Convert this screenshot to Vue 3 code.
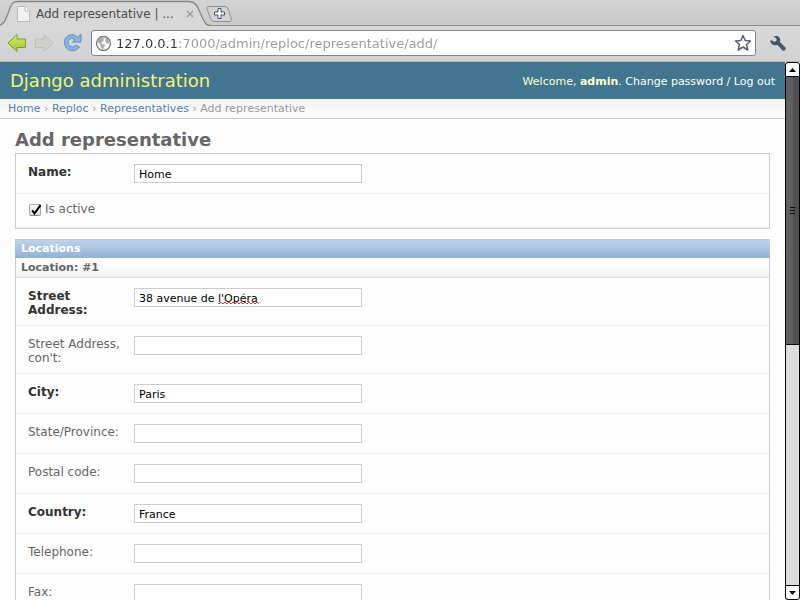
<script setup>
import { ref } from 'vue'

const url = ref('127.0.0.1:7000/admin/reploc/representative/add/')
const name = ref('Home')
const active = ref(true)
const fields = ref([
  { id: 'street', label: 'Street Address:', value: "38 avenue de l'Opéra", required: true, misspelled: true },
  { id: 'street2', label: "Street Address, con't:", value: '' },
  { id: 'city', label: 'City:', value: 'Paris', required: true },
  { id: 'state', label: 'State/Province:', value: '' },
  { id: 'postal', label: 'Postal code:', value: '' },
  { id: 'country', label: 'Country:', value: 'France', required: true },
  { id: 'phone', label: 'Telephone:', value: '' },
  { id: 'fax', label: 'Fax:', value: '' },
])
</script>

<template>
  <div class="browser">
    <div class="tabs">
      <svg class="tab-shape" width="240" height="26" viewBox="0 0 240 26" aria-hidden="true">
        <path d="M0 26V25C4 24 5 21 7 16L10 8C12 3 13 1.500 18 1.500H189C194 1.500 196 4 198 8L203 19C205 23 206 25.500 211 25.500V26Z" fill="#d8d8d8" />
        <path d="M0 25C4 24 5 21 7 16L10 8C12 3 13 1.500 18 1.500H189C194 1.500 196 4 198 8L203 19C205 23 206 25.500 211 25.500" fill="none" stroke="#858585" stroke-width="1.300" />
        <path d="M209 6.500H224C227 6.500 228 8 229 11L231 18C232 20.500 231 21.500 229 21.500H215C212 21.500 211 20 210 17L207 9C206.500 7.500 207 6.500 209 6.500Z" fill="#d3d3d3" stroke="#909090" />
      </svg>
      <div class="tab">
        <svg width="13" height="16" viewBox="0 0 13 16" aria-hidden="true">
          <path d="M.5.500H8L12.500 5V15.500H.5Z" fill="#f1f1f1" stroke="#bbb" />
          <path d="M8 .5V5H12.500" fill="#fff" stroke="#bbb" />
        </svg>
        <span class="tab-title">Add representative | ...</span>
        <button class="bare" aria-label="Close tab">
          <svg width="8" height="8" viewBox="0 0 8 8"><path d="M1 1L7 7M7 1L1 7" stroke="#a0a0a0" stroke-width="1.500" /></svg>
        </button>
      </div>
      <button class="bare new-tab" aria-label="New tab">
        <svg width="11" height="11" viewBox="0 0 11 11"><path d="M4 .5H7V4H10.500V7H7V10.500H4V7H.5V4H4Z" fill="#fff" stroke="#405573" /></svg>
      </button>
    </div>
    <div class="toolbar">
      <button class="bare" aria-label="Back">
        <svg width="20" height="20" viewBox="0 0 20 20">
          <defs><linearGradient id="green" x2="0" y2="1"><stop stop-color="#dceb76" /><stop offset="1" stop-color="#9fc51f" /></linearGradient></defs>
          <path d="M1 10L10 1.500V6H18.500V14.500H10V18.500Z" fill="url(#green)" stroke="#7d9c25" stroke-linejoin="round" />
        </svg>
      </button>
      <button class="bare forward" aria-label="Forward">
        <svg width="20" height="20" viewBox="0 0 20 20"><path d="M19 10L10 1.500V6H1.500V14.500H10V18.500Z" fill="#d0d1cd" stroke="#bec0bb" stroke-linejoin="round" /></svg>
      </button>
      <button class="bare reload" aria-label="Reload">
        <svg width="20" height="20" viewBox="0 0 20 20">
          <path d="M14.500 4.200C12 1.500 8 1 5 2.700C.7 5.300.4 11.600 3.700 15.300C7.200 19 13.500 18.500 16.500 14L12.700 12.300C11 14.200 8.300 14.400 6.500 12.700C4.500 10.700 4.700 7.500 7 6C8.800 4.800 10.500 5.200 12 6.800L9.500 9H18V1Z" fill="#86b5e4" stroke="#5a91c8" stroke-linejoin="round" />
        </svg>
      </button>
      <div class="omnibox">
        <svg width="17" height="17" viewBox="0 0 17 17" aria-hidden="true">
          <circle cx="8.500" cy="8.500" r="7" fill="#f4f4f4" stroke="#777" stroke-width="1.300" />
          <path d="M3 4L7 2.500L9 4L8 6.500L6 7.500L7 9L10 10L9 12L8 15L6 12L5 9L2.500 7Z" fill="#aaa" />
          <path d="M10.500 3L13.500 4.500L14.500 8L12 8.500L10.500 6.500Z" fill="#aaa" />
        </svg>
        <input v-model="url" class="url" aria-label="Address" spellcheck="false" />
        <button class="bare" aria-label="Bookmark">
          <svg width="18" height="18" viewBox="0 0 18 18"><path d="M9 1.500L11.200 6.500L16.500 7L12.500 10.500L13.800 16L9 13L4.200 16L5.500 10.500L1.500 7L6.800 6.500Z" fill="#fff" stroke="#53627a" stroke-width="1.500" stroke-linejoin="round" /></svg>
        </button>
      </div>
      <button class="bare wrench" aria-label="Settings">
        <svg width="18" height="17" viewBox="0 0 18 17"><path d="M4.500 1.500L8 .8C11 2 11.700 4.500 11 7L16.500 12.500C17.500 14.500 15.500 16.500 13.500 15.500L8.500 10C5 11 2 9.500 1.200 6.200L2 5L5.500 7L7.800 5.300L7.300 3.500Z" fill="#43566f" /></svg>
      </button>
    </div>

    <div class="viewport">
      <div class="page">
        <header class="site-header">
          <div class="brand">Django administration</div>
          <div class="user">Welcome, <strong>admin</strong>. <a href="#">Change password</a> / <a href="#">Log out</a></div>
        </header>
        <nav class="crumbs"><a href="#">Home</a> › <a href="#">Reploc</a> › <a href="#">Representatives</a> › Add representative</nav>
        <main>
          <h1>Add representative</h1>
          <section class="module">
            <div class="row">
              <label class="required" for="name">Name:</label>
              <div class="field"><input id="name" v-model="name" type="text" /></div>
            </div>
            <div class="row check-row">
              <span class="check">
                <input id="active" v-model="active" type="checkbox" />
                <svg v-if="active" width="13" height="13" viewBox="0 0 13 13" aria-hidden="true"><path d="M3.200 6.200L5.500 9.500L11.500 1.200" fill="none" stroke="#000" stroke-width="2" /></svg>
              </span>
              <label for="active">Is active</label>
            </div>
          </section>
          <section class="module">
            <h2>Locations</h2>
            <h3>Location: #1</h3>
            <div v-for="f in fields" :key="f.id" class="row">
              <label :class="{ required: f.required }" :for="f.id">{{ f.label }}</label>
              <div class="field">
                <input :id="f.id" v-model="f.value" type="text" spellcheck="false" />
                <span v-if="f.misspelled" class="squiggle" aria-hidden="true"></span>
              </div>
            </div>
          </section>
        </main>
      </div>
      <div class="scrollbar">
        <button class="arrow up" aria-label="Scroll up"><svg width="7" height="4" viewBox="0 0 7 4"><path d="M0 4L3.500 0L7 4Z" /></svg></button>
        <div class="thumb"><i></i><i></i><i></i></div>
        <div class="track"></div>
        <button class="arrow down" aria-label="Scroll down"><svg width="7" height="4" viewBox="0 0 7 4"><path d="M0 0L3.500 4L7 0Z" /></svg></button>
      </div>
    </div>
  </div>
</template>

<style>
body { overflow: hidden; }
</style>

<style scoped>
* { box-sizing: border-box; }
.browser {
  display: flex;
  flex-direction: column;
  height: 100vh;
  font-family: "DejaVu Sans", sans-serif;
  font-size: 12px;
  color: #666;
}
.bare { display: flex; padding: 0; border: 0; background: none; }
.tabs {
  position: relative;
  display: flex;
  align-items: center;
  height: 26px;
  flex: none;
  padding: 2px 0 0 17px;
  background: linear-gradient(#d3d3d3, #cacaca);
  border-bottom: 1px solid #8c8c8c;
}
.tab-shape { position: absolute; left: 0; top: 0; }
.tab { position: relative; display: flex; align-items: center; width: 177px; }
.tab-title { flex: 1; margin-left: 6px; color: #4c4c4c; white-space: nowrap; }
.new-tab { position: relative; margin-left: 20px; }
.toolbar {
  display: flex;
  align-items: center;
  height: 36px;
  flex: none;
  padding: 0 13px 1px 7px;
  background: linear-gradient(#d8d8d8, #d2d2d2);
  border-bottom: 1px solid #bababa;
}
.forward { margin-left: 7px; }
.reload { margin-left: 9px; }
.omnibox {
  flex: 1;
  display: flex;
  align-items: center;
  height: 26px;
  margin-left: 8px;
  padding: 0 3px;
  border: 1px solid #858585;
  border-radius: 3px;
  background: #fff;
}
.url {
  flex: 1;
  min-width: 0;
  margin-left: 4px;
  padding: 0;
  border: 0;
  outline: 0;
  font: 13px "DejaVu Sans", sans-serif;
  color: transparent;
  background: linear-gradient(90deg, #333 62px, #999 62px);
  -webkit-background-clip: text;
  background-clip: text;
}
.wrench { margin-left: 13px; }
.viewport { flex: 1; min-height: 0; display: flex; }
.page { flex: 1; min-width: 0; overflow: hidden; background: #fdfdfd; }
.site-header {
  display: flex;
  align-items: center;
  justify-content: space-between;
  height: 37px;
  padding: 0 10px;
  background: #417690;
  color: #ffc;
}
.brand { font-size: 18px; color: #f4f379; }
.user { padding-top: 2px; font-size: 11px; }
.user a { color: #fff; text-decoration: none; }
.crumbs {
  height: 20px;
  padding: 3px 8px 2px;
  border-bottom: 1px solid #ccc;
  background: linear-gradient(#efefef, #fff);
  font-size: 11px;
  line-height: 14px;
  color: #999;
}
.crumbs a { color: #5b80b2; text-decoration: none; }
main { padding: 10px 15px; }
h1 { margin: 0; font-size: 18px; line-height: 22px; padding-bottom: 2px; }
.module { margin-bottom: 10px; border: 1px solid #ccc; }
h2, h3 { margin: 0; padding: 0 5px; font-size: 11px; }
h2 { margin: -1px -1px 0; padding-left: 6px; line-height: 18px; background: linear-gradient(#bdd2ea, #91b2d3); color: #fff; border-top: 1px solid #b4cae0; }
h3 { line-height: 19px; background: linear-gradient(#fff 30%, #f0f0f0); border-bottom: 1px solid #ddd; }
.row {
  display: flex;
  min-height: 40px;
  padding: 10px 12px 8px;
  border-bottom: 1px solid #eee;
  line-height: 14px;
}
.row > label { width: 106px; padding: 1px 10px 0 0; }
.row > .required { font-weight: bold; color: #333; }
.field { position: relative; display: flex; align-items: flex-start; }
.field input {
  width: 228px;
  height: 19px;
  padding: 1px 4px 0;
  border: 1px solid #ccc;
  background: #fff;
  font: 11px "DejaVu Sans", sans-serif;
  color: #000;
}
.squiggle {
  position: absolute;
  left: 84px;
  top: 14px;
  width: 41px;
  height: 2px;
  background: conic-gradient(#e33 25%, transparent 0 50%, #e33 0 75%, transparent 0) 0 0 / 4px 2px;
}
.check-row { min-height: 34px; padding-top: 7px; padding-bottom: 8px; }
.check { position: relative; display: flex; align-items: flex-start; margin: 3px 4px 0 1px; }
.check input {
  appearance: none;
  width: 12px;
  height: 12px;
  margin: 0;
  border: 1px solid #aaa;
  border-bottom-color: #888;
  border-radius: 2px;
  background: linear-gradient(#f6f6f6, #ddd);
}
.check svg { position: absolute; left: 0; top: 0; pointer-events: none; }
.scrollbar { width: 15px; flex: none; display: flex; flex-direction: column; background: #ddd; }
.arrow {
  display: flex;
  align-items: center;
  justify-content: center;
  width: 15px;
  height: 15px;
  padding: 0;
  border: 1px solid #000;
  background: #fff;
}
.up { border-radius: 3px 3px 0 0; }
.down { border-radius: 0 0 3px 3px; }
.thumb {
  flex: 268;
  display: flex;
  flex-direction: column;
  align-items: center;
  justify-content: center;
  gap: 2px;
  border: 1px solid #000;
  border-top: 0;
  background: linear-gradient(90deg, #606060 50%, #505050 50%);
}
.thumb i { width: 5px; height: 1px; background: #111; }
.track { flex: 240; border: solid #000; border-width: 0 1px; }
</style>
